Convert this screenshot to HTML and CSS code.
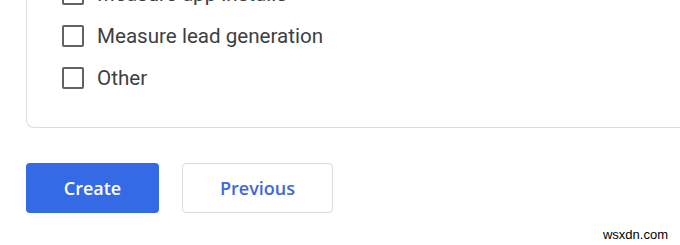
FILE: index.html
```html
<!DOCTYPE html>
<html lang="en">
<head>
    <meta charset="UTF-8">
    <meta name="viewport" content="width=device-width, initial-scale=1.0">
    <title>Business objectives</title>
    <link rel="stylesheet" href="styles.css">
</head>
<body>
    <div class="card">
        <label class="option"><span class="box"></span>Measure app installs</label>
        <label class="option"><span class="box"></span>Measure lead generation</label>
        <label class="option"><span class="box"></span>Other</label>
    </div>
    <div class="actions">
        <button class="btn btn-primary">Create</button>
        <button class="btn btn-outline">Previous</button>
    </div>
    <div class="watermark">wsxdn.com</div>
</body>
</html>
```

FILE: styles.css
```css
body {
    margin: 0;
    padding: 0;
    width: 680px;
    height: 245px;
    overflow: hidden;
    position: relative;
    background: #fff;
    font-family: Roboto, Arial, sans-serif;
    color: #3c4043;
}
.card {
    margin: -45px 0 0 26px;
    width: 700px;
    border: 1px solid #dadce0;
    border-right: none;
    border-radius: 0 0 0 8px;
    padding: 17px 0 28px 35px;
    display: flex;
    flex-direction: column;
}
.option {
    display: flex;
    align-items: center;
    height: 42px;
    font-size: 20.6px;
}
.box {
    width: 18px;
    height: 18px;
    border: 2px solid #5f6368;
    border-radius: 2px;
    margin-right: 13px;
    flex-shrink: 0;
}
.actions {
    display: flex;
    gap: 23px;
    margin: 35px 0 0 26px;
}
.btn {
    height: 50px;
    border-radius: 4px;
    font-family: "Open Sans", Arial, sans-serif;
    font-size: 18px;
    font-weight: 600;
    cursor: pointer;
}
.btn-primary {
    width: 133px;
    background: #346ae5;
    border: none;
    color: #fff;
}
.btn-outline {
    width: 151px;
    background: #fff;
    border: 1px solid #dadce0;
    color: #3f66dd;
}
.watermark {
    position: absolute;
    right: 12px;
    bottom: 3px;
    font-family: "Liberation Sans", Arial, sans-serif;
    font-size: 13px;
    color: #000;
}
```
